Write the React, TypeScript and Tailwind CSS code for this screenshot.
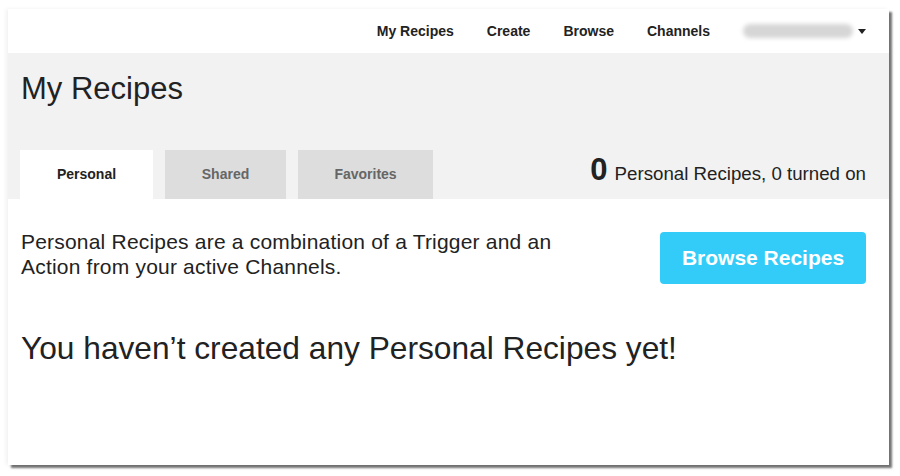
import React from 'react';

const navLinks = ['My Recipes', 'Create', 'Browse', 'Channels'];
const tabs = [
  { label: 'Personal', cls: 'w-[133px] bg-white text-[#222]' },
  { label: 'Shared', cls: 'w-[121px] bg-[#dddddd] text-[#666]' },
  { label: 'Favorites', cls: 'w-[135px] bg-[#dddddd] text-[#666]' },
];

const App: React.FC = () => {
  return (
    <div className="w-[900px] h-[476px] bg-white font-['Liberation_Sans',Arial,sans-serif] text-[#222]">
      <div className="ml-[8px] pt-[9px]">
        <div className="w-[881px] h-[456px] bg-white flex flex-col shadow-[3px_3px_2px_rgba(0,0,0,0.55),-2px_0_4px_rgba(0,0,0,0.06)]">
          {/* Top nav */}
          <nav className="h-[44px] flex items-center justify-end pr-[23px] text-[14px] font-bold text-[#222]">
            <div className="flex items-center gap-[33px]">
              {navLinks.map((l) => (
                <a key={l} href="#" className="leading-none">
                  {l}
                </a>
              ))}
              <div className="flex items-center gap-[5px]">
                <div className="w-[110px] h-[14px] rounded-full bg-[#d6d6d6] blur-[2px]" />
                <span className="w-0 h-0 border-x-[4px] border-x-transparent border-t-[5px] border-t-[#222]" />
              </div>
            </div>
          </nav>

          {/* Gray header with tabs */}
          <header className="bg-[#f2f2f2] pt-[17px] pl-[13px] pr-[23px]">
            <h1 className="text-[31px] leading-[37px] font-normal text-[#222]">My Recipes</h1>
            <div className="mt-[43px] flex items-end justify-between">
              <div className="flex gap-[12px] -ml-px">
                {tabs.map((t) => (
                  <div
                    key={t.label}
                    className={`h-[49px] flex items-center justify-center text-[14px] font-bold ${t.cls}`}
                  >
                    {t.label}
                  </div>
                ))}
              </div>
              <div className="pb-[14px] flex items-baseline gap-[7px]">
                <span className="text-[31px] font-bold leading-none text-[#222]">0</span>
                <span className="text-[18.7px] leading-none text-[#222]">Personal Recipes, 0 turned on</span>
              </div>
            </div>
          </header>

          {/* Content */}
          <main className="pt-[30px] pl-[13px] pr-[23px]">
            <div className="flex items-start justify-between">
              <p className="w-[560px] text-[21px] tracking-[0.2px] leading-[25px] text-[#222]">
                Personal Recipes are a combination of a Trigger and an Action from your active Channels.
              </p>
              <button className="mt-[3px] w-[206px] h-[52px] rounded-[4px] bg-[#33ccf8] text-white text-[21px] font-bold">
                Browse Recipes
              </button>
            </div>
            <h2 className="mt-[45px] text-[31.7px] leading-[38px] font-normal text-[#222]">
              You haven’t created any Personal Recipes yet!
            </h2>
          </main>
        </div>
      </div>
    </div>
  );
};

export default App;
